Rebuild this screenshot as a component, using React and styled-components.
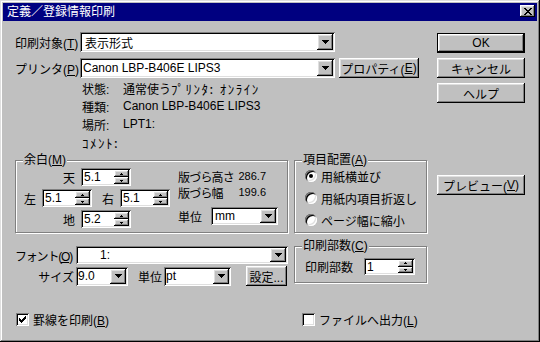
import React from 'react';
import styled, { createGlobalStyle, css } from 'styled-components';

const GlobalStyle = createGlobalStyle`
  html, body { margin: 0; padding: 0; background: #c0c0c0; }
  body {
    font-family: "Liberation Sans", "Noto Sans CJK JP", sans-serif;
    font-size: 12px;
    color: #000;
  }
`;

const raised = css`
  background: #c0c0c0;
  box-shadow: inset -1px -1px #000, inset 1px 1px #fff, inset -2px -2px #808080, inset 2px 2px #dfdfdf;
`;

const sunken = css`
  background: #fff;
  box-shadow: inset 1px 1px #808080, inset -1px -1px #fff, inset 2px 2px #000, inset -2px -2px #dfdfdf;
`;

const Window = styled.div`
  width: 540px;
  height: 342px;
  box-sizing: border-box;
  padding: 3px;
  background: #c0c0c0;
  box-shadow: inset -1px -1px #000, inset 1px 1px #dfdfdf, inset -2px -2px #808080, inset 2px 2px #fff;
  display: flex;
  flex-direction: column;
`;

const TitleBar = styled.div`
  height: 18px;
  background: #000080;
  color: #fff;
  display: flex;
  justify-content: space-between;
  padding: 0 2px 0 4px;
`;

const TitleText = styled.span`
  line-height: 18px;
`;

const CloseButton = styled.span`
  ${raised};
  width: 15px;
  height: 12px;
  margin-top: 2px;
  display: flex;
  align-items: center;
  justify-content: center;
`;

const Body = styled.div`
  flex: 1;
  display: flex;
  gap: 10px;
  padding: 11px 12px 0 12px;
`;

const Main = styled.div`
  width: 412px;
  display: grid;
  grid-template-columns: 273px 133px;
  column-gap: 6px;
  align-content: start;
  align-items: start;
`;

const FieldRow = styled.div`
  grid-column: 1 / -1;
  display: flex;
  align-items: center;
  margin-top: ${p => p.$mt || 0}px;
`;

const FieldLabel = styled.span`
  width: ${p => p.$w || 65}px;
  flex: none;
  white-space: nowrap;
  text-align: ${p => (p.$right ? 'right' : 'left')};
  padding-right: ${p => (p.$right ? 2 : 0)}px;
  box-sizing: border-box;
  margin-left: ${p => p.$ml || 0}px;
  letter-spacing: ${p => (p.$tight ? '-1.2px' : 'normal')};
`;

const Mn = styled.span`
  text-decoration: underline;
`;

const HalfKana = styled.span`
  font-family: "Noto Sans CJK JP", sans-serif;
  font-size: 13px;
  letter-spacing: 1.5px;
`;

const ComboBox = styled.div`
  ${sunken};
  flex: none;
  box-sizing: border-box;
  width: ${p => p.$w}px;
  height: ${p => p.$h || 20}px;
  margin-left: ${p => p.$ml || 0}px;
  padding: 2px;
  display: flex;
  align-items: center;
`;

const ComboText = styled.span`
  flex: 1;
  padding-left: ${p => p.$pad ?? 2}px;
  white-space: nowrap;
  overflow: hidden;
`;

const DropButton = styled.span`
  ${raised};
  width: 16px;
  align-self: stretch;
  display: flex;
  align-items: center;
  justify-content: center;
`;

const Button = styled.button`
  ${raised};
  border: none;
  padding: 0;
  font: inherit;
  color: #000;
  flex: none;
  width: ${p => p.$w}px;
  height: ${p => p.$h || 20}px;
  margin-left: ${p => p.$ml || 0}px;
  margin-top: ${p => p.$mt || 0}px;
  display: flex;
  align-items: center;
  justify-content: center;
  white-space: nowrap;
  ${p => p.$default && css`
    box-shadow: inset 0 0 0 1px #000, inset -2px -2px #000, inset 2px 2px #fff,
      inset -3px -3px #808080, inset 3px 3px #dfdfdf;
  `}
`;

const ButtonColumn = styled.div`
  width: 88px;
  padding-top: 1px;
  display: flex;
  flex-direction: column;
  gap: 5px;
`;

const InfoList = styled.div`
  grid-column: 1 / -1;
  margin-top: 1px;
  padding-left: 67px;
`;

const InfoLine = styled.div`
  height: 18px;
  display: flex;
  align-items: center;
  white-space: nowrap;
`;

const InfoKey = styled.span`
  width: 41px;
`;

const InfoExtra = styled(HalfKana)`
  margin-left: 5px;
`;

const Group = styled.div`
  position: relative;
  box-sizing: border-box;
  height: ${p => p.$h}px;
  margin-top: ${p => p.$mt || 0}px;
  border: 1px solid #808080;
  box-shadow: inset 1px 1px #fff, 1px 1px #fff;
`;

const Legend = styled.span`
  position: absolute;
  top: -8px;
  left: 7px;
  padding: 0 1px;
  line-height: 14px;
  background: #c0c0c0;
  white-space: nowrap;
`;

const MarginBody = styled.div`
  display: flex;
  gap: 8px;
  padding: 7px 0 0 8px;
`;

const MarginGrid = styled.div`
  width: 146px;
  display: flex;
  flex-direction: column;
  gap: 3px;
`;

const MarginRow = styled.div`
  height: 18px;
  display: flex;
  align-items: center;
  justify-content: center;
  gap: 6px;
`;

const SideLabel = styled.span`
  margin-left: ${p => p.$ml || 0}px;
`;

const SpinBox = styled.div`
  ${sunken};
  flex: none;
  box-sizing: border-box;
  width: ${p => p.$w || 50}px;
  height: ${p => p.$h || 18}px;
  margin-left: ${p => p.$ml || 0}px;
  padding: 2px;
  display: flex;
`;

const SpinValue = styled.span`
  flex: 1;
  padding-left: 1px;
  display: flex;
  align-items: center;
`;

const SpinButtons = styled.span`
  width: 15px;
  display: flex;
  flex-direction: column;
`;

const SpinHalf = styled.span`
  ${raised};
  flex: 1;
  display: flex;
  align-items: center;
  justify-content: center;
`;

const PageInfo = styled.div`
  width: 100px;
  display: flex;
  flex-direction: column;
`;

const PageStat = styled.div`
  width: 88px;
  height: 16px;
  display: flex;
  align-items: center;
  justify-content: space-between;
  white-space: nowrap;
  & > span:first-child { letter-spacing: -0.8px; }
`;

const Num = styled.span`
  font-size: 11px;
`;

const UnitRow = styled.div`
  margin-top: 7px;
  display: flex;
  align-items: center;
  gap: 9px;
`;

const RadioList = styled.div`
  padding: 7px 0 0 10px;
  display: flex;
  flex-direction: column;
  gap: 6px;
`;

const RadioRow = styled.div`
  height: 16px;
  display: flex;
  align-items: center;
  gap: 4px;
  white-space: nowrap;
`;

const RadioDot = styled.span`
  width: 12px;
  height: 12px;
  border-radius: 50%;
  background: #fff;
  box-shadow: inset 1px 1px #808080, inset -1px -1px #fff, inset 2px 2px #000, inset -2px -2px #dfdfdf;
  display: flex;
  align-items: center;
  justify-content: center;
  &::after {
    content: '';
    width: 4px;
    height: 4px;
    border-radius: 50%;
    background: ${p => (p.$on ? '#000' : 'transparent')};
  }
`;

const FontBlock = styled.div`
  margin-top: 13px;
`;

const SubRow = styled.div`
  display: flex;
  align-items: center;
  margin-top: ${p => p.$mt || 0}px;
`;

const CopiesRow = styled.div`
  display: flex;
  align-items: center;
  padding: 11px 0 0 10px;
  gap: 11px;
`;

const CheckRow = styled.div`
  margin-top: 25px;
  padding-left: ${p => p.$pl || 0}px;
  height: 16px;
  display: flex;
  align-items: center;
  gap: 4px;
  white-space: nowrap;
`;

const CheckBox = styled.span`
  ${sunken};
  width: 13px;
  height: 13px;
  display: flex;
  align-items: center;
  justify-content: center;
`;

const DownArrow = () => (
  <svg width="7" height="4" viewBox="0 0 7 4" shapeRendering="crispEdges">
    <path d="M0 0h7v1H0zM1 1h5v1H1zM2 2h3v1H2zM3 3h1v1H3z" fill="#000" />
  </svg>
);

const TinyArrow = ({ up }) => (
  <svg width="3" height="2" viewBox="0 0 3 2" shapeRendering="crispEdges">
    <path d={up ? 'M1 0h1v1H1zM0 1h3v1H0z' : 'M0 0h3v1H0zM1 1h1v1H1z'} fill="#000" />
  </svg>
);

const Combo = ({ w, h, pad, ml, children }) => (
  <ComboBox $w={w} $h={h} $ml={ml}>
    <ComboText $pad={pad}>{children}</ComboText>
    <DropButton>
      <DownArrow />
    </DropButton>
  </ComboBox>
);

const Spin = ({ value, w, h, ml }) => (
  <SpinBox $w={w} $h={h} $ml={ml}>
    <SpinValue>{value}</SpinValue>
    <SpinButtons>
      <SpinHalf><TinyArrow up /></SpinHalf>
      <SpinHalf><TinyArrow /></SpinHalf>
    </SpinButtons>
  </SpinBox>
);

const layouts = [
  { label: '用紙横並び', on: true },
  { label: '用紙内項目折返し' },
  { label: 'ページ幅に縮小' },
];

export default function App() {
  return (
    <>
      <GlobalStyle />
      <Window>
        <TitleBar>
          <TitleText>定義／登録情報印刷</TitleText>
          <CloseButton>
            <svg width="8" height="7" viewBox="0 0 8 7" shapeRendering="crispEdges">
              <path
                d="M0 0h2v1H0zM6 0h2v1H6zM1 1h2v1H1zM5 1h2v1H5zM2 2h4v1H2zM3 3h2v1H3zM2 4h4v1H2zM1 5h2v1H1zM5 5h2v1H5zM0 6h2v1H0zM6 6h2v1H6z"
                fill="#000"
              />
            </svg>
          </CloseButton>
        </TitleBar>
        <Body>
          <Main>
            <FieldRow>
              <FieldLabel>印刷対象(<Mn>T</Mn>)</FieldLabel>
              <Combo w={255} h={20} pad={3}>表示形式</Combo>
            </FieldRow>
            <FieldRow $mt={6}>
              <FieldLabel>プリンタ(<Mn>P</Mn>)</FieldLabel>
              <Combo w={255} h={20} pad={1}>Canon LBP-B406E LIPS3</Combo>
              <Button $w={80} $ml={4}>プロパティ(<Mn>E</Mn>)</Button>
            </FieldRow>
            <InfoList>
              <InfoLine>
                <InfoKey>状態:</InfoKey>
                <span>通常使う<HalfKana>ﾌﾟﾘﾝﾀ:</HalfKana></span>
                <InfoExtra>ｵﾝﾗｲﾝ</InfoExtra>
              </InfoLine>
              <InfoLine>
                <InfoKey>種類:</InfoKey>
                <span>Canon LBP-B406E LIPS3</span>
              </InfoLine>
              <InfoLine>
                <InfoKey>場所:</InfoKey>
                <span>LPT1:</span>
              </InfoLine>
              <InfoLine>
                <InfoKey><HalfKana>ｺﾒﾝﾄ:</HalfKana></InfoKey>
              </InfoLine>
            </InfoList>

            <Group $h={73} $mt={9}>
              <Legend>余白(<Mn>M</Mn>)</Legend>
              <MarginBody>
                <MarginGrid>
                  <MarginRow>
                    <SideLabel>天</SideLabel>
                    <Spin value="5.1" />
                  </MarginRow>
                  <MarginRow>
                    <SideLabel>左</SideLabel>
                    <Spin value="5.1" />
                    <SideLabel $ml={4}>右</SideLabel>
                    <Spin value="5.1" />
                  </MarginRow>
                  <MarginRow>
                    <SideLabel>地</SideLabel>
                    <Spin value="5.2" />
                  </MarginRow>
                </MarginGrid>
                <PageInfo>
                  <PageStat>
                    <span>版づら高さ</span>
                    <Num>286.7</Num>
                  </PageStat>
                  <PageStat>
                    <span>版づら幅</span>
                    <Num>199.6</Num>
                  </PageStat>
                  <UnitRow>
                    <span>単位</span>
                    <Combo w={67} h={18} pad={2}>mm</Combo>
                  </UnitRow>
                </PageInfo>
              </MarginBody>
            </Group>

            <Group $h={73} $mt={9}>
              <Legend>項目配置(<Mn>A</Mn>)</Legend>
              <RadioList>
                {layouts.map(l => (
                  <RadioRow key={l.label}>
                    <RadioDot $on={l.on} />
                    <span>{l.label}</span>
                  </RadioRow>
                ))}
              </RadioList>
            </Group>

            <FontBlock>
              <SubRow>
                <FieldLabel $w={61} $tight>フォント(<Mn>O</Mn>)</FieldLabel>
                <Combo w={212} h={18} pad={22}>1:</Combo>
              </SubRow>
              <SubRow $mt={2}>
                <FieldLabel $w={61} $right>サイズ</FieldLabel>
                <Combo w={52} h={19} pad={0}>9.0</Combo>
                <FieldLabel $w={26} $ml={10}>単位</FieldLabel>
                <Combo w={67} h={19} pad={0}>pt</Combo>
                <Button $w={41} $ml={15}>設定...</Button>
              </SubRow>
            </FontBlock>

            <Group $h={37} $mt={13}>
              <Legend>印刷部数(<Mn>C</Mn>)</Legend>
              <CopiesRow>
                <span>印刷部数</span>
                <Spin value="1" w={51} h={17} />
              </CopiesRow>
            </Group>

            <CheckRow $pl={1}>
              <CheckBox>
                <svg width="7" height="7" viewBox="0 0 7 7" shapeRendering="crispEdges">
                  <path
                    d="M6 0h1v1H6zM5 1h2v1H5zM0 2h1v1H0zM4 2h3v1H4zM0 3h2v1H0zM3 3h3v1H3zM0 4h5v1H0zM1 5h3v1H1zM2 6h1v1H2z"
                    fill="#000"
                  />
                </svg>
              </CheckBox>
              <span>罫線を印刷(<Mn>B</Mn>)</span>
            </CheckRow>
            <CheckRow $pl={8}>
              <CheckBox />
              <span>ファイルへ出力(<Mn>L</Mn>)</span>
            </CheckRow>
          </Main>

          <ButtonColumn>
            <Button $w={88} $default>OK</Button>
            <Button $w={88}>キャンセル</Button>
            <Button $w={88}>ヘルプ</Button>
            <Button $w={88} $mt={67}>プレビュー(<Mn>V</Mn>)</Button>
          </ButtonColumn>
        </Body>
      </Window>
    </>
  );
}
